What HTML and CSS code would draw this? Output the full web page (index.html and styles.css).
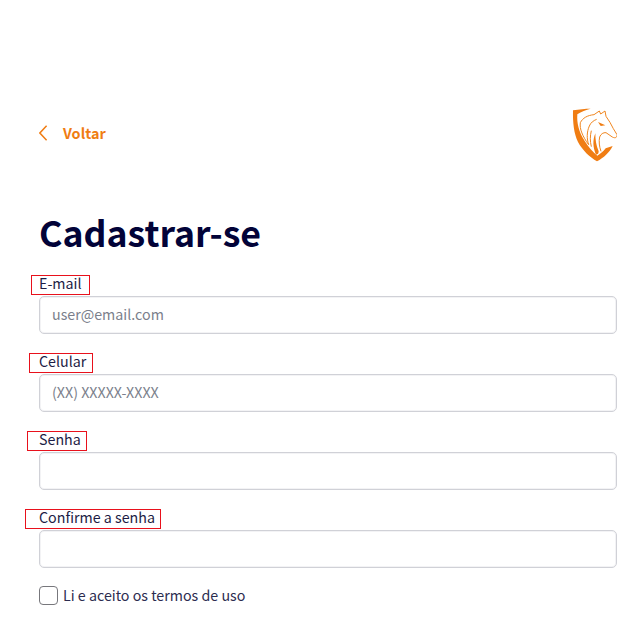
FILE: index.html
```html
<!DOCTYPE html>
<html lang="pt">
<head>
<meta charset="utf-8">
<title>Cadastrar-se</title>
<link rel="stylesheet" href="styles.css">
</head>
<body>
<main class="page">
  <header class="topbar">
    <a class="back" href="#">
      <svg class="back-icon" width="10" height="16" viewBox="0 0 10 16"><path d="M7.600 0.800 L0.900 8 L7.600 15.200" fill="none" stroke="#f07d13" stroke-width="1.500"/></svg>
      <span>Voltar</span>
    </a>
    <svg class="logo" width="47" height="56" viewBox="0 0 141 168">
      <path d="M9 13 C28 10 46 8 62 8 C48 12 34 17 22 25 C20 50 26 78 44 105 C54 122 68 137 82 149 C92 143 100 136 107 127 L128 120 C118 140 101 155 81 166 C60 154 38 134 24 108 C12 84 8 50 9 13 Z" fill="#f07d13"/>
      <path d="M31 50 C38 36 52 28 72 26 L88 15 L92 24 L105 15 L108 31 C116 42 124 55 130 68 L141 86 C142 94 136 98 127 93 L108 80 C100 79 92 84 89 93 C86 106 88 122 93 136" fill="none" stroke="#f0861f" stroke-width="3"/>
      <path d="M31 50 C28 68 38 92 56 116 C50 98 50 78 58 60 C62 50 70 44 80 40" fill="none" stroke="#f0861f" stroke-width="3"/>
      <path d="M76 82 C68 102 68 124 78 146 C84 146 86 142 86 136 C78 118 76 100 76 82 Z" fill="#f07d13"/>
      <path d="M84 48 L106 58 L92 60 Z" fill="#f07d13"/>
      <path d="M64 74 C60 90 60 106 64 122" fill="none" stroke="#f0861f" stroke-width="3"/>
    </svg>
  </header>

  <h1 class="title">Cadastrar-se</h1>

  <form class="form">
    <div class="field">
      <label class="label label-a">E-mail</label>
      <input class="input" type="text" placeholder="user@email.com">
    </div>
    <div class="field">
      <label class="label label-b">Celular</label>
      <input class="input" type="text" placeholder="(XX) XXXXX-XXXX">
    </div>
    <div class="field">
      <label class="label label-c">Senha</label>
      <input class="input" type="password">
    </div>
    <div class="field">
      <label class="label label-d">Confirme a senha</label>
      <input class="input" type="password">
    </div>
    <label class="terms">
      <span class="box"></span>
      <span>Li e aceito os termos de uso</span>
    </label>
  </form>
</main>
</body>
</html>
```

FILE: styles.css
```css
* {
  box-sizing: border-box;
}

html,
body {
  margin: 0;
  background: #fff;
  overflow: hidden;
}

body {
  font-family: "Noto Sans CJK SC", "Noto Sans", sans-serif;
  color: #0b0b3b;
}

.page {
  width: 617px;
  height: 625px;
  padding: 106px 0 0 39px;
}

.topbar {
  display: flex;
  justify-content: space-between;
  align-items: flex-start;
  height: 56px;
}

.back {
  display: flex;
  align-items: center;
  gap: 14px;
  height: 56px;
  padding-bottom: 3px;
  color: #f07d13;
  font-size: 14.400px;
  font-weight: 700;
  line-height: 20px;
  text-decoration: none;
}

.back-icon {
  display: block;
}

.logo {
  display: block;
}

.title {
  margin: 47px 0 0;
  color: #020338;
  font-size: 35.700px;
  font-weight: 700;
  line-height: 46px;
}

.form {
  display: flex;
  flex-direction: column;
  gap: 19px;
  margin-top: 20px;
}

.field {
  display: flex;
  flex-direction: column;
  align-items: flex-start;
  gap: 1px;
}

.label {
  display: block;
  height: 20px;
  padding-right: 7px;
  border: 1px solid #e8111c;
  font-size: 14.250px;
  line-height: 14px;
  color: #1d1d45;
}

.label-a {
  margin-left: -8px;
  padding-left: 7px;
}

.label-b {
  margin-left: -10px;
  padding-left: 9px;
  padding-right: 6px;
}

.label-c {
  margin-left: -12px;
  padding-left: 11px;
  padding-right: 5px;
}

.label-d {
  margin-left: -14px;
  padding-left: 13px;
  padding-right: 5px;
}

.input {
  display: block;
  width: 100%;
  height: 38px;
  padding: 0 12px 4px;
  border: 1px solid #d0d1d7;
  border-radius: 5px;
  background: #fff;
  box-shadow: inset 0 0 0 1px #f3f3f5;
  font-family: inherit;
  font-size: 14.250px;
  color: #1d1d45;
  outline: none;
}

.input::placeholder {
  color: #7b7f8c;
  opacity: 1;
}

.terms {
  display: flex;
  align-items: center;
  gap: 5px;
  margin-top: -2px;
  font-size: 14.250px;
  line-height: 20px;
  color: #2c2c50;
}

.box {
  width: 19px;
  height: 19px;
  border: 1.500px solid #77777c;
  border-radius: 4px;
  background: #fff;
}
```
